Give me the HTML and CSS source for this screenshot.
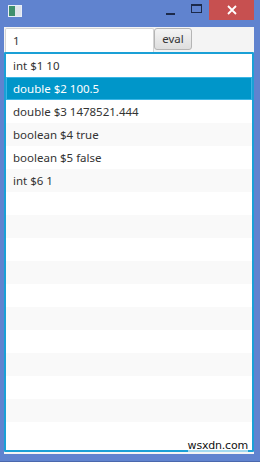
FILE: index.html
```html
<!DOCTYPE html>
<html>
<head>
<meta charset="utf-8">
<link rel="stylesheet" href="styles.css">
</head>
<body>
<div class="window">
  <div class="titlebar">
    <div class="appicon"><span class="ai-a"></span><span class="ai-b"></span></div>
    <div class="spacer"></div>
    <div class="tb-btn min"><span></span></div>
    <div class="tb-btn max"><span></span></div>
    <div class="tb-btn close">
      <svg width="10" height="10" viewBox="0 0 10 10"><path d="M1 1L9 9M9 1L1 9" stroke="#fff" stroke-width="1.8"/></svg>
    </div>
  </div>
  <div class="frame">
    <div class="content">
      <div class="toolbar">
        <div class="field">1</div>
        <div class="button">eval</div>
      </div>
      <div class="list">
        <div class="row">int $1 10</div>
        <div class="row odd selected">double $2 100.5</div>
        <div class="row">double $3 1478521.444</div>
        <div class="row odd">boolean $4 true</div>
        <div class="row">boolean $5 false</div>
        <div class="row odd">int $6 1</div>
        <div class="row"></div>
        <div class="row odd"></div>
        <div class="row"></div>
        <div class="row odd"></div>
        <div class="row"></div>
        <div class="row odd"></div>
        <div class="row"></div>
        <div class="row odd"></div>
        <div class="row"></div>
        <div class="row odd"></div>
        <div class="row"></div>
      </div>
    </div>
  </div>
  <div class="watermark">wsxdn.com</div>
</div>
</body>
</html>
```
FILE: styles.css
```css
html, body {
  margin: 0;
  padding: 0;
}
body {
  background: #6083cf;
  font-family: "Noto Sans", "Open Sans", sans-serif;
  font-size: 11.5px;
  color: #333;
  width: 260px;
  height: 462px;
  overflow: hidden;
}
.window {
  position: relative;
  width: 260px;
  height: 462px;
  display: flex;
  flex-direction: column;
  border-bottom: 1px solid #4a68ad;
  box-sizing: border-box;
}
.titlebar {
  height: 27px;
  display: flex;
  align-items: flex-start;
  flex: none;
}
.appicon {
  margin: 5px 0 0 8px;
  width: 12px;
  height: 10px;
  display: flex;
  border: 1px solid #e8eef8;
  background: #f2f4f6;
}
.ai-a {
  width: 6px;
  background: #3f8f6e;
}
.ai-b {
  width: 6px;
  background: #dfe4ea;
}
.spacer {
  flex: 1;
}
.tb-btn {
  height: 20px;
  display: flex;
  align-items: center;
  justify-content: center;
}
.min {
  width: 26px;
}
.min span {
  width: 9px;
  height: 2px;
  background: #1c2a4a;
  margin-top: 7px;
}
.max {
  width: 26px;
}
.max span {
  width: 9px;
  height: 6px;
  border: 1px solid #1c2a4a;
  border-top-width: 2px;
  margin-top: -3px;
}
.close {
  width: 45px;
  margin-right: 6px;
  background: #c75050;
}
.frame {
  flex: 1;
  padding: 0 6px 7px 4px;
  display: flex;
  flex-direction: column;
}
.content {
  flex: 1;
  background: #f4f4f4;
  display: flex;
  flex-direction: column;
  padding-bottom: 2px;
}
.toolbar {
  display: flex;
  align-items: flex-start;
  padding: 1px 0 0 1px;
  height: 25px;
  box-sizing: border-box;
}
.field {
  width: 149px;
  height: 24px;
  box-sizing: border-box;
  background: #fff;
  border: 1px solid #d4d4d4;
  border-bottom: none;
  border-radius: 2px 2px 0 0;
  padding: 0 7px;
  line-height: 23px;
  color: #333;
}
.button {
  width: 38px;
  height: 22px;
  box-sizing: border-box;
  border: 1px solid #b5b5b5;
  border-radius: 3px;
  background: linear-gradient(#f4f4f4, #dedede);
  text-align: center;
  line-height: 20px;
  color: #333;
}
.list {
  flex: 1;
  border: 2px solid #1aa0d6;
  border-radius: 1px;
  background: #fff;
  overflow: hidden;
}
.row {
  height: 23px;
  line-height: 23px;
  padding: 0 7px;
  background: #fff;
  white-space: nowrap;
  box-sizing: border-box;
}
.row.odd {
  background: #f9f9f9;
}
.row.selected {
  background: #0096c9;
  color: #fff;
  border: 1px solid #3cb5e5;
  line-height: 21px;
  padding: 0 6px;
}
.watermark {
  position: absolute;
  right: 12px;
  bottom: 9px;
  font-family: "DejaVu Sans", sans-serif;
  font-size: 11px;
  color: #111;
  background: rgba(255,255,255,0.6);
  letter-spacing: -0.2px;
}
```
